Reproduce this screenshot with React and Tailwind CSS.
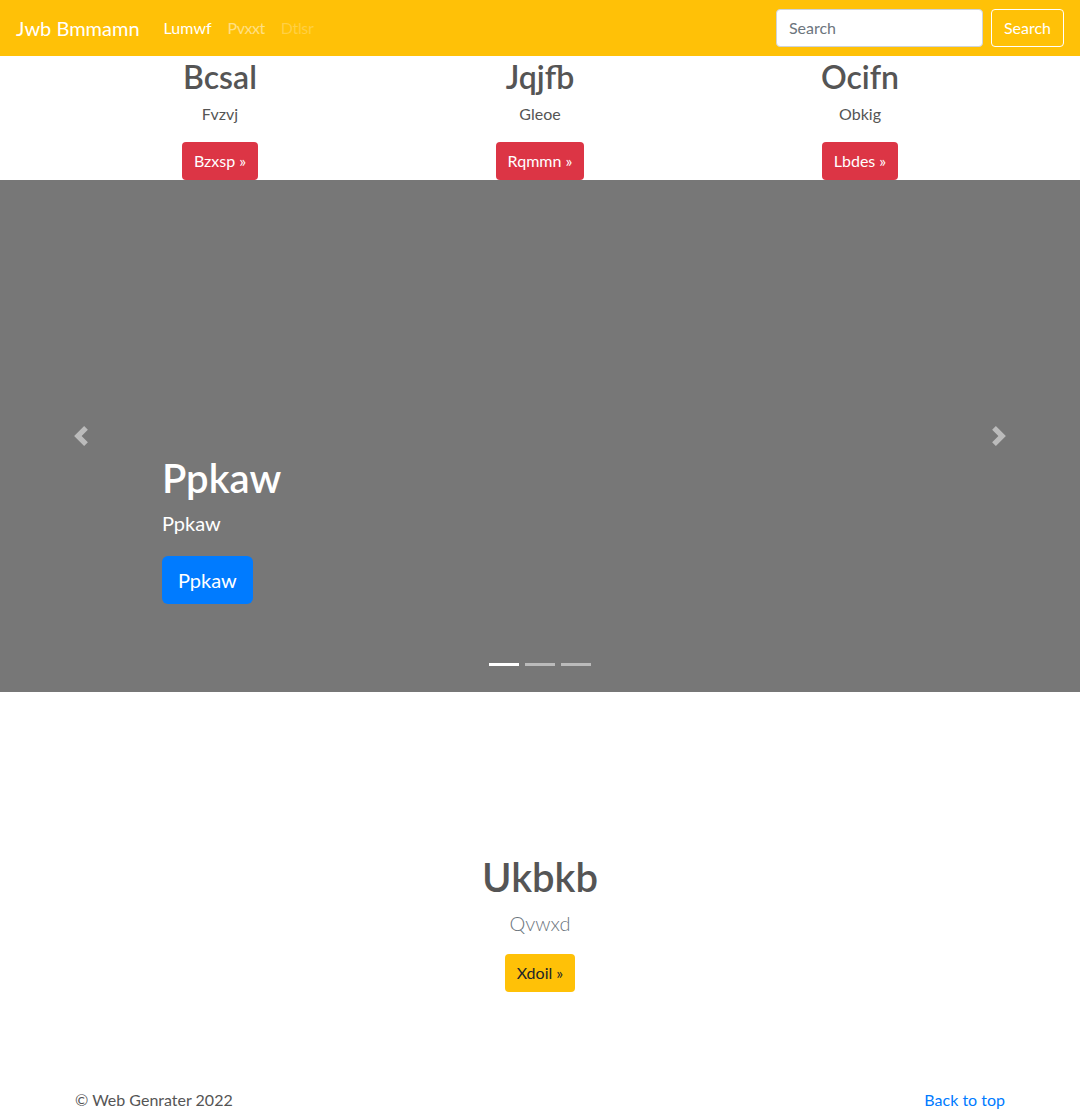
import React from "react";

const font = { fontFamily: 'Lato, "Open Sans", sans-serif' };

function Prev() {
  return (
    <svg width="20" height="20" viewBox="0 0 8 8" fill="#fff">
      <path d="M5.25 0l-4 4 4 4 1.5-1.5L4.25 4l2.5-2.5L5.25 0z" />
    </svg>
  );
}
function Next() {
  return (
    <svg width="20" height="20" viewBox="0 0 8 8" fill="#fff">
      <path d="M2.75 0l-1.5 1.5L3.75 4l-2.5 2.5L2.75 8l4-4-4-4z" />
    </svg>
  );
}

export default function App() {
  const cols = [
    ["Bcsal", "Fvzvj", "Bzxsp »"],
    ["Jqjfb", "Gleoe", "Rqmmn »"],
    ["Ocifn", "Obkig", "Lbdes »"],
  ];
  return (
    <div className="bg-white text-[#555] text-base leading-6" style={font}>
      {/* navbar */}
      <nav className="h-[56px] bg-[#ffc107] flex items-center px-4">
        <span className="text-white text-[20px] leading-[30px] mr-4">Jwb Bmmamn</span>
        <div className="flex items-center">
          <span className="px-2 text-white">Lumwf</span>
          <span className="px-2 text-white/50 tracking-[-0.5px]">Pvxxt</span>
          <span className="px-2 text-white/25 tracking-[-0.3px]">Dtlsr</span>
        </div>
        <div className="ml-auto flex items-center">
          <div className="w-[207px] h-[38px] bg-white border border-[#ced4da] rounded-[4px] px-3 flex items-center text-[#6c757d]">
            Search
          </div>
          <div className="ml-2 h-[38px] px-3 border border-white rounded-[4px] flex items-center text-white">
            Search
          </div>
        </div>
      </nav>

      {/* marketing row */}
      <div className="w-[960px] mx-auto grid grid-cols-3 pt-[2px]">
        {cols.map(([h, p, b]) => (
          <div key={h} className="px-[15px] flex flex-col items-center">
            <h2 className="text-[32px] leading-[38px] font-semibold mb-[6px]">{h}</h2>
            <p className="mb-4 leading-6">{p}</p>
            <div className="h-[38px] px-3 rounded-[4px] bg-[#dc3545] text-white flex items-center">
              {b}
            </div>
          </div>
        ))}
      </div>

      {/* carousel */}
      <div className="relative h-[512px] bg-[#777] flex">
        <div className="w-[162px] flex items-center justify-center opacity-50">
          <Prev />
        </div>
        <div className="flex-1 flex flex-col justify-end pb-[88px] text-white">
          <h1 className="text-[40px] leading-[48px] font-semibold mb-[8px]">Ppkaw</h1>
          <p className="text-[20px] leading-[26px] mb-5">Ppkaw</p>
          <div className="self-start h-[48px] px-4 rounded-[6px] bg-[#007bff] text-white text-[20px] flex items-center">
            Ppkaw
          </div>
        </div>
        <div className="w-[162px] flex items-center justify-center opacity-50">
          <Next />
        </div>
        <div className="absolute left-0 right-0 bottom-[26px] flex justify-center gap-[6px]">
          <span className="w-[30px] h-[3px] bg-white" />
          <span className="w-[30px] h-[3px] bg-white/50" />
          <span className="w-[30px] h-[3px] bg-white/50" />
        </div>
      </div>

      {/* featured */}
      <div className="pt-[161px] flex flex-col items-center">
        <h2 className="text-[40px] leading-[48px] font-semibold mb-[7px]">Ukbkb</h2>
        <p className="text-[20px] leading-[30px] font-light text-[#6c757d] mb-4">Qvwxd</p>
        <div className="h-[38px] px-3 rounded-[4px] bg-[#ffc107] text-[#212529] flex items-center">
          Xdoil »
        </div>
      </div>

      {/* footer */}
      <footer className="w-[960px] mx-auto px-[15px] pt-[96px] flex justify-between leading-6">
        <span>© Web Genrater 2022</span>
        <span className="text-[#007bff]">Back to top</span>
      </footer>
    </div>
  );
}
